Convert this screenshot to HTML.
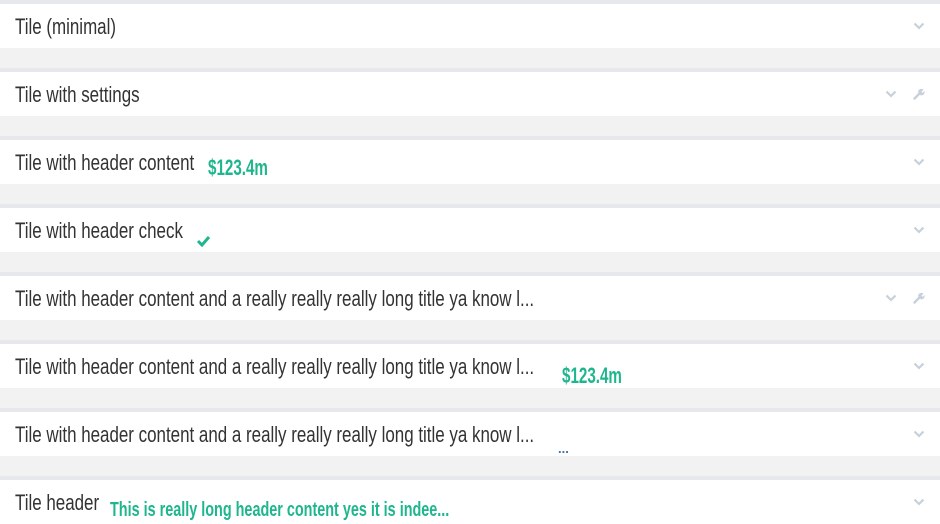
<!DOCTYPE html>
<html><head><meta charset="utf-8"><style>
*{margin:0;padding:0;box-sizing:border-box}
body{width:940px;height:524px;background:#f2f2f2;position:relative;overflow:hidden;font-family:"Liberation Sans",sans-serif}
.row{position:absolute;left:0;width:940px;height:48px;border-top:4px solid #e6e8eb;background:#fff}
.t{position:absolute;left:15px;top:12px;font-size:22px;line-height:22px;color:#333;white-space:nowrap;transform:scaleX(0.77);transform-origin:left top}
.g{position:absolute;font-size:22px;line-height:22px;font-weight:bold;color:#1fb68e;white-space:nowrap;transform:scaleX(0.69);transform-origin:left top}
.chev{position:absolute;top:18px;left:913px}
.chev2{left:885px}
.wr{position:absolute;top:16px;left:913px}
</style></head><body>
<svg width="0" height="0" style="position:absolute"><defs>
<symbol id="c" viewBox="0 0 12 8"><path d="M1.5 1.5 L6 6 L10.5 1.5" fill="none" stroke="#c8d1d9" stroke-width="2.2"/></symbol>
<symbol id="w" viewBox="0 0 12 12"><path d="M1.5 10.5 L6.5 5.5" stroke="#c8d1d9" stroke-width="2.4" stroke-linecap="round"/><path d="M6 6 A3 3 0 0 1 10.5 1.8 L8.5 3.8 L9.8 4.9 L11.2 3 A3 3 0 0 1 6.8 6.8 Z" fill="#c8d1d9"/></symbol>
</defs></svg>

<div class="row" style="top:0"><span class="t">Tile (minimal)</span><svg class="chev" width="12" height="8"><use href="#c"/></svg></div>
<div class="row" style="top:68px"><span class="t">Tile with settings</span><svg class="chev chev2" width="12" height="8"><use href="#c"/></svg><svg class="wr" width="12" height="12"><use href="#w"/></svg></div>
<div class="row" style="top:136px"><span class="t">Tile with header content</span><span class="g" style="left:208px;top:17px">$123.4m</span><svg class="chev" width="12" height="8"><use href="#c"/></svg></div>
<div class="row" style="top:204px"><span class="t">Tile with header check</span><svg style="position:absolute;left:196px;top:27px" width="15" height="12" viewBox="0 0 15 12"><path d="M2 6 L6 10 L13 2" fill="none" stroke="#1fb68e" stroke-width="3"/></svg><svg class="chev" width="12" height="8"><use href="#c"/></svg></div>
<div class="row" style="top:272px"><span class="t">Tile with header content and a really really really long title ya know l...</span><svg class="chev chev2" width="12" height="8"><use href="#c"/></svg><svg class="wr" width="12" height="12"><use href="#w"/></svg></div>
<div class="row" style="top:340px"><span class="t">Tile with header content and a really really really long title ya know l...</span><span class="g" style="left:562px;top:21px">$123.4m</span><svg class="chev" width="12" height="8"><use href="#c"/></svg></div>
<div class="row" style="top:408px"><span class="t">Tile with header content and a really really really long title ya know l...</span><span style="position:absolute;left:558px;top:31px;font-size:13px;font-weight:bold;color:#3a6fb0;line-height:12px">...</span><svg class="chev" width="12" height="8"><use href="#c"/></svg></div>
<div class="row" style="top:476px"><span class="t">Tile header</span><span class="g" style="left:110px;top:19px;font-size:20px;transform:scaleX(0.72)">This is really long header content yes it is indee...</span><svg class="chev" width="12" height="8"><use href="#c"/></svg></div>
</body></html>
